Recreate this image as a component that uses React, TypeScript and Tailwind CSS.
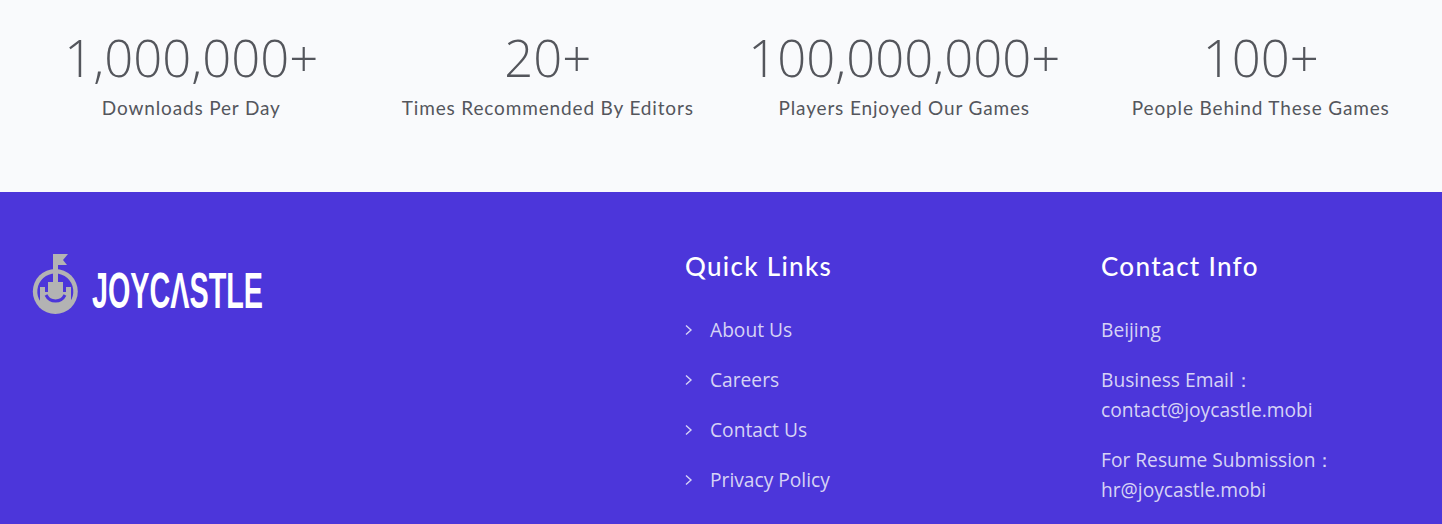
const stats = [
  { value: "1,000,000+", label: "Downloads Per Day" },
  { value: "20+", label: "Times Recommended By Editors" },
  { value: "100,000,000+", label: "Players Enjoyed Our Games" },
  { value: "100+", label: "People Behind These Games" },
];

const links = ["About Us", "Careers", "Contact Us", "Privacy Policy"];

function Logo() {
  return (
    <svg width="300" height="62" viewBox="0 0 300 62" className="block overflow-visible">
      {/* castle mark */}
      <circle cx="23.3" cy="38.5" r="22.5" fill="#b3b3b3" />
      <path d="M8.7 49A18 18 0 1 1 37.9 49Z" fill="#4c36da" />
      <path
        d="M8 51V34H13V39H16V29H21V16H26V29H31V39H34V34H39V51Z"
        fill="#b3b3b3"
      />
      <path d="M21 1H36L31 7L35 12H26V18H21Z" fill="#b3b3b3" />
      <path d="M14 42C18 50 29 50 33 42" fill="none" stroke="#4c36da" strokeWidth="3" />
      <text
        x="60"
        y="54.5"
        fontFamily="Liberation Sans, sans-serif"
        fontWeight="700"
        fontSize="50"
        fill="#fff"
        textLength="171"
        lengthAdjust="spacingAndGlyphs"
      >
        JOYCΛSTLE
      </text>
    </svg>
  );
}

export default function App() {
  return (
    <div className="w-[1442px] h-[524px] overflow-hidden bg-[#f9fafc] font-['Open_Sans',sans-serif]">

      {/* Stats */}
      <section className="grid grid-cols-4 h-[192px] pt-[26px] pl-[13px] pr-[3px] text-center">
        {stats.map((s) => (
          <div key={s.label}>
            <div className="text-[50.8px] leading-[64px] font-light text-[#54565c]">{s.value}</div>
            <div className="mt-[4px] text-[19px] leading-[28px] tracking-[0.85px] text-[#54565c] font-['Lato',sans-serif]">
              {s.label}
            </div>
          </div>
        ))}
      </section>

      {/* Footer */}
      <footer className="flex h-[332px] bg-[#4c36da] pl-[32px] pt-[61px]">
        <div className="w-[653px]">
          <Logo />
        </div>

        <div className="w-[416px]">
          <h3 className="text-[26px] leading-[26px] font-medium text-white tracking-[1.3px] font-['Lato',sans-serif]">
            Quick Links
          </h3>
          <ul className="mt-[26px]">
            {links.map((l) => (
              <li key={l} className="flex items-center h-[50px] text-[19.2px] text-[#d6d3f5]">
                <svg width="8" height="12" viewBox="0 0 8 12" fill="none" stroke="currentColor" strokeWidth="1.4" className="mr-[17px]">
                  <path d="M1 1.5L6 6L1 10.5" />
                </svg>
                {l}
              </li>
            ))}
          </ul>
        </div>

        <div>
          <h3 className="text-[26px] leading-[26px] font-medium text-white tracking-[1.3px] font-['Lato',sans-serif]">
            Contact Info
          </h3>
          <div className="mt-[36px] text-[19.2px] leading-[30px] text-[#d6d3f5]">
            <p>Beijing</p>
            <p className="mt-[20px]">Business Email：<br />contact@joycastle.mobi</p>
            <p className="mt-[20px]">For Resume Submission：<br />hr@joycastle.mobi</p>
          </div>
        </div>
      </footer>
    </div>
  );
}
